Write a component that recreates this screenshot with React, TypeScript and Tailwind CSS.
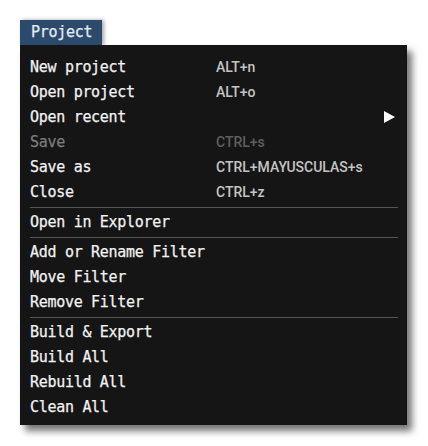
type Item = { label: string; shortcut?: string; disabled?: boolean; submenu?: boolean };

const groups: Item[][] = [
  [
    { label: "New project", shortcut: "ALT+n" },
    { label: "Open project", shortcut: "ALT+o" },
    { label: "Open recent", submenu: true },
    { label: "Save", shortcut: "CTRL+s", disabled: true },
    { label: "Save as", shortcut: "CTRL+MAYUSCULAS+s" },
    { label: "Close", shortcut: "CTRL+z" },
  ],
  [{ label: "Open in Explorer" }],
  [{ label: "Add or Rename Filter" }, { label: "Move Filter" }, { label: "Remove Filter" }],
  [{ label: "Build & Export" }, { label: "Build All" }, { label: "Rebuild All" }, { label: "Clean All" }],
];

const mono = { fontFamily: '"DejaVu Sans Mono", "Liberation Mono", monospace' };

function Row({ item }: { item: Item }) {
  return (
    <div className="flex items-center h-[25px] pl-[10px] pr-[12px]">
      <p
        className={`w-[186px] shrink-0 text-[15px] tracking-[-0.3px] leading-none whitespace-nowrap [-webkit-text-stroke:0.25px_currentColor] ${item.disabled ? "text-[#7c7c7c]" : "text-[#f2f2f2]"}`}
        style={mono}
      >
        {item.label}
      </p>
      <p
        className={`flex-1 font-['Roboto',sans-serif] font-medium text-[14px] leading-none whitespace-nowrap ${item.disabled ? "text-[#5f5f5f]" : "text-[#c4c4c4]"}`}
      >
        {item.shortcut}
      </p>
      {item.submenu && (
        <svg width="11" height="12" viewBox="0 0 11 12">
          <path d="M0 0 L11 6 L0 12 Z" fill="#ffffff" />
        </svg>
      )}
    </div>
  );
}

export default function App() {
  return (
    <div className="w-[428px] h-[446px] bg-white pt-[20px] pl-[20px]">
      <div className="w-[82px] h-[25px] bg-[#2c4a6c] flex items-center pl-[11px] shadow-[2px_0_4px_rgba(0,0,0,0.35)]">
        <span
          className="text-[15px] tracking-[-0.3px] leading-none text-[#e4ecf4] [-webkit-text-stroke:0.25px_currentColor]"
          style={mono}
        >
          Project
        </span>
      </div>
      <div className="w-[387px] bg-[#151515] pt-[9.5px] pb-[5.5px] shadow-[5px_6px_7px_rgba(0,0,0,0.55)]">
        {groups.map((g, gi) => (
          <div key={gi}>
            {gi > 0 && (
              <div className="h-[5px] flex items-center pl-[10px] pr-[9px]">
                <div className="h-px w-full bg-[#555555]" />
              </div>
            )}
            {g.map((item) => (
              <Row key={item.label} item={item} />
            ))}
          </div>
        ))}
      </div>
    </div>
  );
}
